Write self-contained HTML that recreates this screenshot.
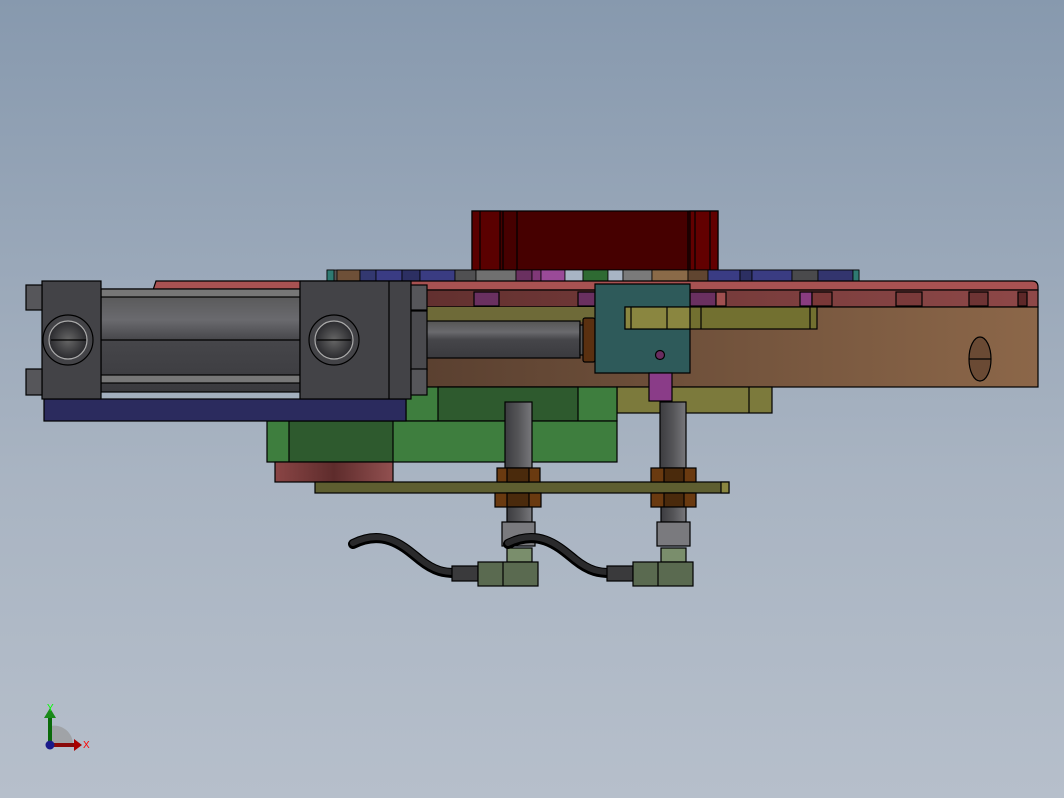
<!DOCTYPE html>
<html><head><meta charset="utf-8"><style>
html,body{margin:0;padding:0;width:1064px;height:798px;overflow:hidden}
body{background:linear-gradient(#8799ae,#a9b4c2 60%,#b6bfcb)}
svg{position:absolute;left:0;top:0}
</style></head><body>
<svg width="1064" height="798" viewBox="0 0 1064 798" xmlns="http://www.w3.org/2000/svg">
<defs>
<linearGradient id="brown" x1="0" x2="1"><stop offset="0" stop-color="#5a4030"/><stop offset="1" stop-color="#8c6749"/></linearGradient>
<linearGradient id="redband" x1="0" x2="1"><stop offset="0" stop-color="#62302f"/><stop offset="1" stop-color="#8e4848"/></linearGradient>
<linearGradient id="tube" x1="0" y1="0" x2="0" y2="1"><stop offset="0" stop-color="#555"/><stop offset=".3" stop-color="#6a6a6e"/><stop offset=".5" stop-color="#46464a"/><stop offset="1" stop-color="#3a3a3e"/></linearGradient>
<linearGradient id="post" x1="0" x2="1"><stop offset="0" stop-color="#3c3c40"/><stop offset=".5" stop-color="#555558"/><stop offset="1" stop-color="#78787c"/></linearGradient>
<linearGradient id="redblk" x1="0" x2="1"><stop offset="0" stop-color="#8a4545"/><stop offset=".5" stop-color="#5e2c2c"/><stop offset="1" stop-color="#925050"/></linearGradient>
<radialGradient id="bore"><stop offset="0" stop-color="#666"/><stop offset="1" stop-color="#2a2a2e"/></radialGradient>
</defs>
<g stroke="#000" stroke-width="1.2">
<!-- red box -->
<rect x="472" y="211" width="246" height="59" fill="#460000"/>
<rect x="472" y="211" width="28" height="59" fill="#5a0000"/>
<rect x="690" y="211" width="28" height="59" fill="#620000"/>
<line x1="480" y1="211" x2="480" y2="270"/><line x1="503" y1="211" x2="503" y2="270"/><line x1="517" y1="211" x2="517" y2="270"/>
<line x1="688" y1="211" x2="688" y2="270"/><line x1="695" y1="211" x2="695" y2="270"/><line x1="710" y1="211" x2="710" y2="270"/>
<!-- colored strip -->
<g stroke-width=".8">
<rect x="327" y="270" width="532" height="11" fill="#555"/>
<rect x="327" y="270" width="7" height="11" fill="#2f7a72"/>
<rect x="337" y="270" width="23" height="11" fill="#6e5038"/>
<rect x="360" y="270" width="16" height="11" fill="#333870"/>
<rect x="376" y="270" width="26" height="11" fill="#3a3c84"/>
<rect x="402" y="270" width="18" height="11" fill="#2c2f62"/>
<rect x="420" y="270" width="35" height="11" fill="#3a3c82"/>
<rect x="455" y="270" width="21" height="11" fill="#505052"/>
<rect x="476" y="270" width="40" height="11" fill="#707070"/>
<rect x="516" y="270" width="16" height="11" fill="#6a3060"/>
<rect x="532" y="270" width="9" height="11" fill="#803878"/>
<rect x="541" y="270" width="24" height="11" fill="#9a4a98"/>
<rect x="565" y="270" width="18" height="11" fill="#a8b4c4"/>
<rect x="583" y="270" width="25" height="11" fill="#2e6a32"/>
<rect x="608" y="270" width="15" height="11" fill="#a8b4c4"/>
<rect x="623" y="270" width="29" height="11" fill="#7a7a7a"/>
<rect x="652" y="270" width="36" height="11" fill="#8a6a48"/>
<rect x="688" y="270" width="20" height="11" fill="#604530"/>
<rect x="708" y="270" width="32" height="11" fill="#3a3c84"/>
<rect x="740" y="270" width="12" height="11" fill="#2c2f62"/>
<rect x="752" y="270" width="40" height="11" fill="#3a3c82"/>
<rect x="792" y="270" width="26" height="11" fill="#4a4a4c"/>
<rect x="818" y="270" width="35" height="11" fill="#33356e"/>
<rect x="853" y="270" width="6" height="11" fill="#2f7a72"/>
</g>
<!-- top red plate -->
<path d="M156 281 L1032 281 Q1038 281 1038 287 L1038 290 L153 290 Z" fill="#a85252"/>
<rect x="420" y="290" width="618" height="17" fill="url(#redband)"/>
<rect x="474" y="292" width="25" height="14" fill="#6a3060"/>
<rect x="578" y="292" width="17" height="14" fill="#6a3060"/>
<rect x="690" y="292" width="26" height="14" fill="#6a3060"/>
<rect x="716" y="292" width="10" height="14" fill="#a05050"/>
<rect x="800" y="292" width="12" height="14" fill="#8a3c80"/>
<rect x="812" y="292" width="20" height="14" fill="#7a3838"/>
<rect x="896" y="292" width="26" height="14" fill="#7a3a3a"/>
<rect x="969" y="292" width="19" height="14" fill="#6e3434"/>
<rect x="1018" y="292" width="9" height="14" fill="#5e2828"/>
<!-- brown block -->
<rect x="420" y="307" width="618" height="80" fill="url(#brown)"/>
<rect x="427" y="307" width="168" height="15" fill="#6e6a38" stroke="none"/>
<ellipse cx="980" cy="359" rx="11" ry="22" fill="#6a4a34"/>
<line x1="969" y1="359" x2="991" y2="359"/>
<!-- olive under -->
<rect x="617" y="387" width="155" height="26" fill="#7c7a3c"/>
<line x1="749" y1="387" x2="749" y2="413"/>
<!-- greens -->
<rect x="406" y="387" width="211" height="34" fill="#3e7e3e"/>
<rect x="438" y="387" width="140" height="34" fill="#2e5a2e"/>
<rect x="267" y="421" width="350" height="41" fill="#3e7e3e"/>
<rect x="289" y="421" width="104" height="41" fill="#2e5a2e"/>
<rect x="275" y="462" width="118" height="20" fill="url(#redblk)"/>
<!-- rod -->
<rect x="420" y="321" width="160" height="37" fill="url(#tube)"/>
<rect x="580" y="325" width="12" height="30" fill="#555"/>
<rect x="583" y="318" width="12" height="44" fill="#5a3010" rx="2"/>
<!-- teal bracket -->
<path d="M595 284 H690 V373 H595 Z" fill="#2e5a5a"/>
<rect x="625" y="307" width="192" height="22" fill="#727030"/>
<rect x="625" y="307" width="65" height="22" fill="#8a8640"/>
<line x1="667" y1="307" x2="667" y2="329"/><line x1="701" y1="307" x2="701" y2="329"/><line x1="810" y1="307" x2="810" y2="329"/>
<line x1="631" y1="307" x2="631" y2="329"/>
<circle cx="660" cy="355" r="4.5" fill="#6a2c60"/>
<rect x="649" y="373" width="23" height="28" fill="#8a3c88"/>
<!-- cylinder -->
<rect x="101" y="289" width="199" height="103" fill="url(#tube)"/>
<rect x="101" y="289" width="199" height="8" fill="#777"/>
<rect x="101" y="375" width="199" height="8" fill="#777"/>
<line x1="101" y1="340" x2="300" y2="340"/>
<rect x="44" y="399" width="362" height="22" fill="#2b2b5e"/>
<rect x="42" y="281" width="59" height="118" fill="#434347"/>
<rect x="300" y="281" width="111" height="118" fill="#434347"/>
<line x1="389" y1="281" x2="389" y2="399"/>
<rect x="411" y="311" width="16" height="59" fill="#4a4a4e"/>
<g fill="#56565a">
<rect x="26" y="285" width="16" height="25"/><rect x="26" y="369" width="16" height="26"/>
<rect x="411" y="285" width="16" height="25"/><rect x="411" y="369" width="16" height="26"/>
</g>
<circle cx="68" cy="340" r="25" fill="none"/>
<circle cx="68" cy="340" r="19" fill="url(#bore)" stroke="#aaa"/>
<line x1="51" y1="340" x2="86" y2="340"/>
<circle cx="334" cy="340" r="25" fill="none"/>
<circle cx="334" cy="340" r="19" fill="url(#bore)" stroke="#aaa"/>
<line x1="317" y1="340" x2="351" y2="340"/>
<!-- posts -->
<rect x="505" y="402" width="27" height="66" fill="url(#post)"/>
<rect x="660" y="402" width="26" height="66" fill="url(#post)"/>
<!-- plate -->
<rect x="315" y="482" width="414" height="11" fill="#5e5e30"/>
<rect x="721" y="482" width="8" height="11" fill="#8a8640"/>
<g fill="#6a3a10">
<rect x="497" y="468" width="43" height="14"/><rect x="651" y="468" width="45" height="14"/>
<rect x="495" y="493" width="46" height="14"/><rect x="651" y="493" width="45" height="14"/>
</g>
<g fill="#4a2a0c"><rect x="507" y="468" width="22" height="14"/><rect x="664" y="468" width="20" height="14"/><rect x="507" y="493" width="22" height="14"/><rect x="664" y="493" width="20" height="14"/></g>
<!-- lower fittings -->
<rect x="507" y="507" width="25" height="15" fill="url(#post)"/>
<rect x="502" y="522" width="33" height="24" fill="#7a7a7e"/>
<rect x="507" y="548" width="25" height="14" fill="#7a8e6c"/>
<rect x="661" y="507" width="25" height="15" fill="url(#post)"/>
<rect x="657" y="522" width="33" height="24" fill="#7a7a7e"/>
<rect x="661" y="548" width="25" height="14" fill="#7a8e6c"/>
</g>
<!-- cables -->
<g fill="none" stroke="#000" stroke-width="10" stroke-linecap="round">
<path d="M353 544 C385 528,405 548,420 560 S445 573,455 573"/>
<path d="M508 544 C540 528,560 548,575 560 S600 573,610 573"/>
</g>
<g fill="none" stroke="#2a2a2c" stroke-width="6" stroke-linecap="round">
<path d="M353 543 C385 527,405 547,420 559 S445 572,455 572"/>
<path d="M508 543 C540 527,560 547,575 559 S600 572,610 572"/>
</g>
<g stroke="#000" stroke-width="1.2">
<rect x="452" y="566" width="26" height="15" fill="#3a3a3c"/>
<rect x="478" y="562" width="60" height="24" fill="#5a6a50"/>
<line x1="503" y1="562" x2="503" y2="586"/>
<rect x="607" y="566" width="26" height="15" fill="#3a3a3c"/>
<rect x="633" y="562" width="60" height="24" fill="#5a6a50"/>
<line x1="658" y1="562" x2="658" y2="586"/>
</g>
<!-- triad -->
<path d="M50 745 L50 726 A19 19 0 0 1 73 745 Z" fill="#999" opacity=".7"/>
<rect x="48" y="716" width="4" height="29" fill="#0a6a0a"/>
<path d="M44 718 L50 708 L56 718 Z" fill="#1a8a1a"/>
<rect x="50" y="743" width="26" height="4" fill="#8a0a0a"/>
<path d="M74 739 L82 745 L74 751 Z" fill="#a00"/>
<circle cx="50" cy="745" r="4.5" fill="#1a1a8a"/>
<text x="47" y="711" font-family="Liberation Sans,sans-serif" font-size="10" fill="#0f0">Y</text>
<text x="83" y="748" font-family="Liberation Sans,sans-serif" font-size="10" fill="#f00">X</text>
</svg>
</body></html>
